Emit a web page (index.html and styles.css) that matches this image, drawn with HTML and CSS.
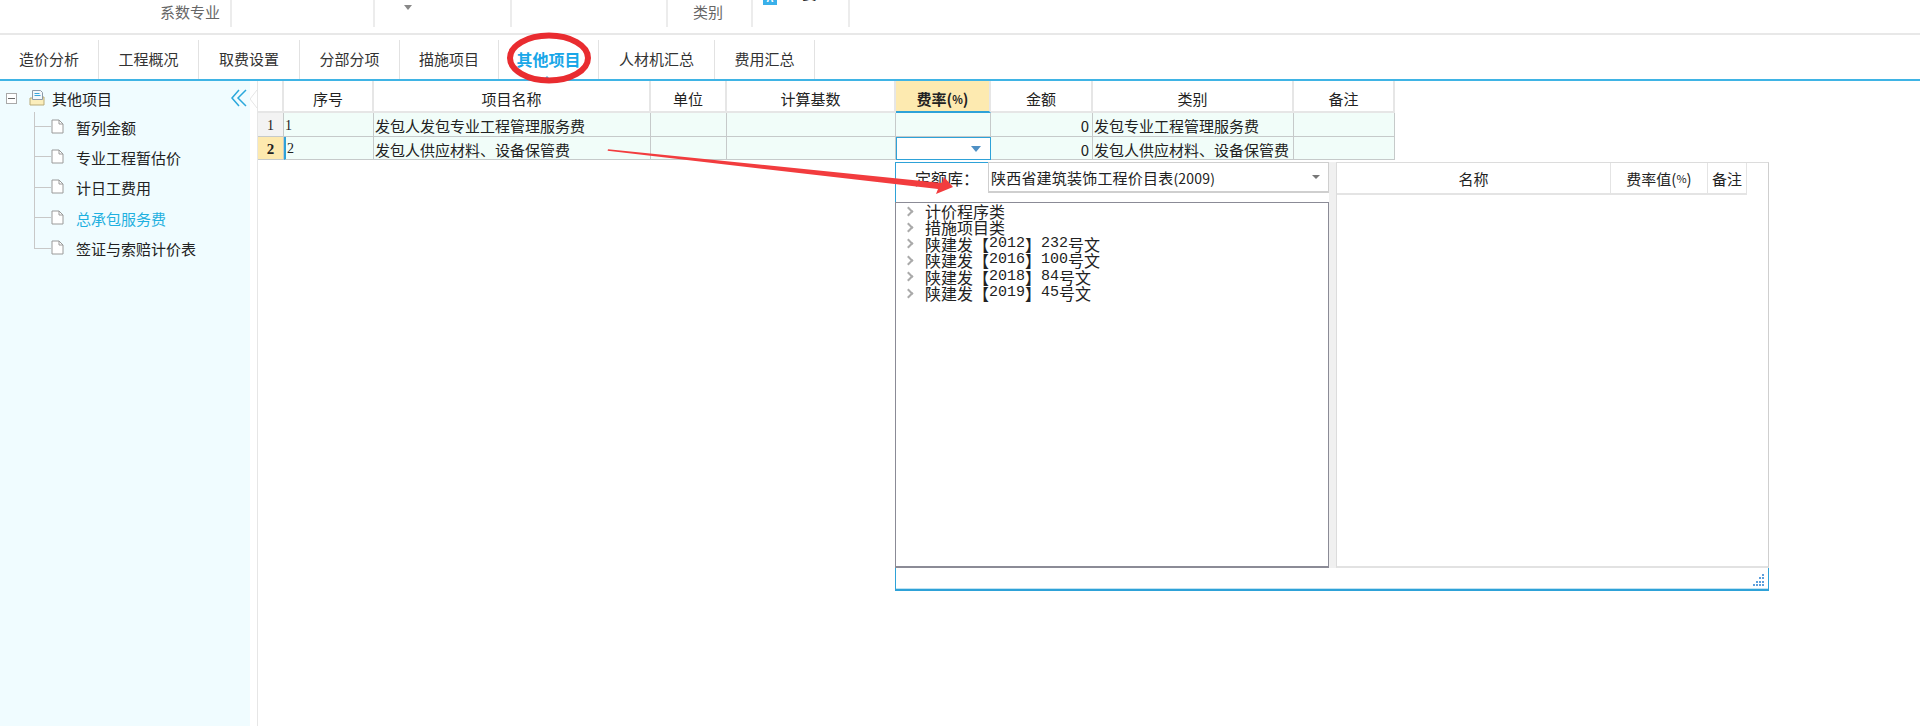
FILE: index.html
```html
<!DOCTYPE html>
<html lang="zh-CN">
<head>
  <meta charset="UTF-8">
  <title>其他项目</title>
  <link rel="stylesheet" href="styles.css">
</head>
<body>
<div class="page">

  <div class="topbar">
    <div class="top-cell top-label w1">系数专业</div>
    <div class="top-cell w2"></div>
    <div class="top-cell w3"><span class="mini-arrow"></span></div>
    <div class="top-cell w4"></div>
    <div class="top-cell top-label w5">类别</div>
    <div class="top-cell top-kind w6"><span class="kind-icon">A</span><span class="kind-text">主要</span></div>
  </div>

  <div class="tabs">
    <div class="tab t99">造价分析</div>
    <div class="tab t100">工程概况</div>
    <div class="tab t101">取费设置</div>
    <div class="tab t100">分部分项</div>
    <div class="tab t99">描施项目</div>
    <div class="tab t100 active">其他项目</div>
    <div class="tab t116">人材机汇总</div>
    <div class="tab t100">费用汇总</div>
  </div>

  <div class="main">
    <div class="sidebar">
      <div class="root">
        <span class="minus"></span>
        <svg class="root-icon" width="16" height="16" viewBox="0 0 16 16">
          <path d="M1 8h3l1-1h10v8H1z" fill="#fbeebc" stroke="#b9ab78"/>
          <path d="M3.5 .5h8l2 2v7h-10z" fill="#f4f8fb" stroke="#8d9aa8"/>
          <path d="M5.5 3.5h5M5.5 5.5h6" stroke="#3aa7dc"/>
        </svg>
        <span class="root-text">其他项目</span>
        <svg class="collapse" width="16" height="18" viewBox="0 0 16 18" fill="none" stroke="#2aa8dc" stroke-width="1.5">
          <path d="M8 1 1 9l7 8"/>
          <path d="M15 1 7 9l8 8"/>
        </svg>
      </div>
      <div class="node"><span class="elbow"></span><svg class="doc" width="13" height="15" viewBox="0 0 13 15"><path d="M1 1h7l4 4v9H1z" fill="#fff" stroke="#9a9a9a"/><path d="M8 1v4h4" fill="none" stroke="#9a9a9a"/></svg><span>暂列金额</span></div>
      <div class="node"><span class="elbow"></span><svg class="doc" width="13" height="15" viewBox="0 0 13 15"><path d="M1 1h7l4 4v9H1z" fill="#fff" stroke="#9a9a9a"/><path d="M8 1v4h4" fill="none" stroke="#9a9a9a"/></svg><span>专业工程暂估价</span></div>
      <div class="node"><span class="elbow"></span><svg class="doc" width="13" height="15" viewBox="0 0 13 15"><path d="M1 1h7l4 4v9H1z" fill="#fff" stroke="#9a9a9a"/><path d="M8 1v4h4" fill="none" stroke="#9a9a9a"/></svg><span>计日工费用</span></div>
      <div class="node current"><span class="elbow"></span><svg class="doc" width="13" height="15" viewBox="0 0 13 15"><path d="M1 1h7l4 4v9H1z" fill="#fff" stroke="#9a9a9a"/><path d="M8 1v4h4" fill="none" stroke="#9a9a9a"/></svg><span>总承包服务费</span></div>
      <div class="node"><span class="elbow"></span><svg class="doc" width="13" height="15" viewBox="0 0 13 15"><path d="M1 1h7l4 4v9H1z" fill="#fff" stroke="#9a9a9a"/><path d="M8 1v4h4" fill="none" stroke="#9a9a9a"/></svg><span>签证与索赔计价表</span></div>
    </div>

    <div class="splitter">
      <svg class="notch" width="7" height="18" viewBox="0 0 7 18" fill="#fff" stroke="#e6e6e6"><path d="M7 0 0 9l7 9"/></svg>
    </div>

    <div class="sheet">
      <div class="row head">
        <div class="cell"></div>
        <div class="cell">序号</div>
        <div class="cell">项目名称</div>
        <div class="cell">单位</div>
        <div class="cell">计算基数</div>
        <div class="cell rate-head">费率(<small>%</small>)</div>
        <div class="cell">金额</div>
        <div class="cell">类别</div>
        <div class="cell">备注</div>
      </div>
      <div class="row data r1">
        <div class="cell num-head">1</div>
        <div class="cell left">1</div>
        <div class="cell left">发包人发包专业工程管理服务费</div>
        <div class="cell"></div>
        <div class="cell"></div>
        <div class="cell"></div>
        <div class="cell right">0</div>
        <div class="cell left">发包专业工程管理服务费</div>
        <div class="cell"></div>
      </div>
      <div class="row data r2">
        <div class="cell num-head cur">2</div>
        <div class="cell left cur-left">2</div>
        <div class="cell left">发包人供应材料、设备保管费</div>
        <div class="cell"></div>
        <div class="cell"></div>
        <div class="cell editing"><span class="drop"></span></div>
        <div class="cell right">0</div>
        <div class="cell left">发包人供应材料、设备保管费</div>
        <div class="cell"></div>
      </div>
    </div>
  </div>

  <div class="popup">
    <div class="popup-body">
      <div class="pane-left">
        <div class="lib-row">
          <div class="lib-label">定额库：</div>
          <div class="combo"><span class="combo-text">陕西省建筑装饰工程价目表<small>(2009)</small></span><span class="combo-arrow"></span></div>
        </div>
        <div class="lib-tree">
          <div class="lib-item"><i></i>计价程序类</div>
          <div class="lib-item"><i></i>措施项目类</div>
          <div class="lib-item"><i></i>陕建发【<b>2012</b>】<b>232</b>号文</div>
          <div class="lib-item"><i></i>陕建发【<b>2016</b>】<b>100</b>号文</div>
          <div class="lib-item"><i></i>陕建发【<b>2018</b>】<b>84</b>号文</div>
          <div class="lib-item"><i></i>陕建发【<b>2019</b>】<b>45</b>号文</div>
        </div>
      </div>
      <div class="pane-right">
        <div class="rate-cols">
          <div class="rc c1">名称</div>
          <div class="rc c2">费率值(<small>%</small>)</div>
          <div class="rc c3">备注</div>
        </div>
      </div>
    </div>
    <div class="strip">
      <svg width="14" height="13" viewBox="0 0 14 13" fill="#5b9fdc">
        <rect x="11" y="0" width="2" height="2"/>
        <rect x="8" y="3" width="2" height="2"/><rect x="11" y="3" width="2" height="2"/>
        <rect x="5" y="7" width="2" height="2"/><rect x="8" y="7" width="2" height="2"/><rect x="11" y="7" width="2" height="2"/>
        <rect x="2" y="10" width="2" height="2"/><rect x="5" y="10" width="2" height="2"/><rect x="8" y="10" width="2" height="2"/><rect x="11" y="10" width="2" height="2"/>
      </svg>
    </div>
  </div>

  <!-- annotations drawn on top of the screenshot -->
  <svg class="marks" width="1920" height="726" viewBox="0 0 1920 726">
    <ellipse cx="549" cy="58" rx="39" ry="22.5" fill="none" stroke="#e92c30" stroke-width="6"/>
    <polygon points="608,149.2 942,183 944,177 953,187 936,194 938,189 607.6,150.8" fill="#f23c3e"/>
  </svg>

</div>
</body>
</html>
```

FILE: styles.css
```css
* {
  box-sizing: border-box;
  margin: 0;
  padding: 0;
}

body {
  font-family: "Noto Sans CJK SC", "Liberation Sans", sans-serif;
  font-size: 15px;
  color: #222;
  background: #fff;
  overflow: hidden;
}

.page {
  position: relative;
  width: 1920px;
  height: 726px;
  overflow: hidden;
  display: flex;
  flex-direction: column;
}

/* top toolbar, cut off by the screenshot */
.topbar {
  height: 35px;
  padding-bottom: 6px;
  border-bottom: 2px solid #e8e8e8;
  display: flex;
  flex: none;
}

.top-cell {
  height: 27px;
  border-right: 2px solid #ececec;
  overflow: hidden;
}

.top-label {
  color: #666;
  font-size: 15px;
  line-height: 24px;
  text-align: right;
}

.w1 { width: 232px; padding-right: 10px; }
.w2 { width: 143px; }
.w3 { width: 137px; }
.w4 { width: 156px; }
.w5 { width: 85px; padding-right: 28px; }
.w6 { width: 97px; }

.mini-arrow {
  display: block;
  width: 0;
  margin: 5px 0 0 29px;
  border: 4px solid transparent;
  border-top: 5px solid #888;
  border-bottom: 0;
}

.top-kind {
  display: flex;
  gap: 10px;
  padding-left: 10px;
}

.kind-icon {
  width: 14px;
  height: 14px;
  margin-top: -9px;
  background: #39b0ea;
  color: #fff;
  font-size: 10px;
  line-height: 14px;
  text-align: center;
  font-weight: 700;
  flex: none;
}

.kind-text {
  margin-top: -18px;
  line-height: 22px;
}

/* tabs */
.tabs {
  height: 46px;
  padding-top: 5px;
  border-bottom: 2px solid #3fb4e5;
  display: flex;
  flex: none;
}

.tab {
  height: 39px;
  line-height: 38px;
  text-align: center;
  border-right: 1px solid #e2e2e2;
  color: #333;
}

.t99 { width: 99px; }
.t100 { width: 100px; }
.t101 { width: 101px; }
.t116 { width: 116px; }

.tab.active {
  color: #19a7e8;
  font-weight: 700;
  font-size: 16px;
  position: relative;
}

.tab.active::after {
  content: "";
  position: absolute;
  left: 45px;
  bottom: 0;
  border: 3px solid transparent;
  border-bottom: 3px solid #3fb4e5;
  border-top: 0;
}

/* main area */
.main {
  flex: 1;
  display: flex;
  min-height: 0;
}

.sidebar {
  width: 250px;
  background: #f0fcff;
  flex: none;
}

.root {
  height: 31px;
  padding: 3px 3px 0 6px;
  display: flex;
  align-items: center;
}

.minus {
  width: 11px;
  height: 11px;
  border: 1px solid #a9a9a9;
  background: linear-gradient(#666, #666) center / 7px 1px no-repeat, #fff;
  flex: none;
}

.root-icon {
  margin: 0 7px 0 12px;
  flex: none;
}

.collapse {
  margin-left: auto;
}

.node {
  height: 30.4px;
  padding-left: 34px;
  display: flex;
  align-items: center;
  background: linear-gradient(#c8c8c8, #c8c8c8) 34px 0 / 1px 100% no-repeat;
}

.node:last-child {
  background: none;
}

.elbow {
  width: 17px;
  height: 15px;
  align-self: flex-start;
  border-left: 1px solid #c8c8c8;
  border-bottom: 1px solid #c8c8c8;
  flex: none;
}

.doc {
  margin: 0 12px 2px 0;
  flex: none;
}

.node.current {
  color: #1fb0e0;
}

.splitter {
  width: 8px;
  padding-top: 9px;
  border-right: 1px solid #e6e6e6;
  flex: none;
}

.notch {
  display: block;
}

/* grid */
.sheet {
  flex: 1;
}

.row {
  display: grid;
  grid-template-columns: 26px 90px 277px 76px 169px 95px 102px 201px 101px;
}

.head {
  height: 32px;
}

.r1 { height: 24px; }
.r2 { height: 23px; }

.cell {
  display: flex;
  align-items: center;
  justify-content: center;
  white-space: nowrap;
  overflow: hidden;
  border-right: 1px solid #c6caca;
  border-bottom: 1px solid #c6caca;
}

.head .cell {
  border-right: 2px solid #e6e6e6;
  border-bottom: 2px solid #e6e6e6;
  padding-top: 5px;
}

.data .cell {
  background: #f1fdf9;
  padding-top: 2px;
}

.data .num-head {
  background: #f3f3f3;
  font-family: "Liberation Serif", serif;
  font-size: 14px;
}

.data .num-head.cur {
  background: #fde9ae;
  font-weight: 700;
  font-size: 15px;
}

.left {
  justify-content: flex-start;
  padding-left: 1px;
}

.right {
  justify-content: flex-end;
  padding-right: 3px;
}

.data .left:nth-child(2) {
  font-family: "Liberation Serif", serif;
  font-size: 14px;
}

.data .cur-left {
  border-left: 2px solid #2ea2d8;
}

.head .rate-head {
  background: #fdeab0;
  border-bottom: 2px solid #2ea2d8;
  font-weight: 700;
}

small {
  font-size: 11px;
}

.data .editing {
  background: #fff;
  border: 1px solid #2ea2d8;
  justify-content: flex-end;
  padding: 0 9px 0 0;
}

.drop {
  border: 5px solid transparent;
  border-top: 6px solid #4f90c4;
  border-bottom: 0;
}

/* dropdown over the grid */
.popup {
  position: absolute;
  left: 895px;
  top: 162px;
  width: 874px;
  height: 429px;
  background: #fff;
  display: flex;
  flex-direction: column;
}

.popup-body {
  height: 406px;
  background: #f0f0f0;
  display: flex;
  flex: none;
}

.pane-left {
  width: 434px;
  margin-right: 7px;
  display: flex;
  flex-direction: column;
  flex: none;
}

.lib-row {
  height: 40px;
  background: #fff;
  border-left: 1px solid #2ea2d8;
  border-top: 1px solid #2ea2d8;
  display: flex;
  align-items: flex-start;
  flex: none;
}

.lib-label {
  width: 92px;
  height: 31px;
  padding-left: 19px;
  line-height: 30px;
  font-size: 16px;
  flex: none;
}

.combo {
  flex: 1;
  height: 31px;
  margin-top: -1px;
  padding: 0 8px 0 2px;
  border: 1px solid #cfcfcf;
  border-bottom-width: 2px;
  display: flex;
  align-items: center;
  justify-content: space-between;
  white-space: nowrap;
}

.combo-text {
  letter-spacing: .2px;
}

.combo-arrow {
  border: 4px solid transparent;
  border-top: 4px solid #777;
  border-bottom: 0;
}

.combo small {
  font-size: 14px;
}

.lib-tree {
  flex: 1;
  min-height: 0;
  background: #fff;
  border: 1px solid #8b8b96;
  border-bottom-width: 2px;
  overflow: hidden;
}

.lib-item {
  height: 16.4px;
  padding-left: 9px;
  display: flex;
  align-items: center;
  font-size: 16px;
  line-height: 16.4px;
  white-space: nowrap;
}

.lib-item i {
  width: 7px;
  height: 7px;
  margin-right: 13px;
  border-top: 2px solid #aaa;
  border-right: 2px solid #aaa;
  transform: rotate(45deg);
  flex: none;
}

.lib-item b {
  font-family: "Liberation Mono", monospace;
  font-weight: 400;
  font-size: 15px;
}

.pane-right {
  flex: 1;
  background: #fff;
  border-top: 1px solid #dcdcdc;
  border-left: 1px solid #dcdcdc;
  border-right: 1px solid #cfcfcf;
  border-bottom: 2px solid #e2e2e2;
}

.rate-cols {
  height: 32px;
  display: flex;
}

.rc {
  height: 100%;
  border-right: 1px solid #e4e4e4;
  border-bottom: 2px solid #e4e4e4;
  display: flex;
  align-items: center;
  justify-content: center;
}

.c1 { width: 274px; }
.c2 { width: 97px; }
.c3 { width: 39px; }

.strip {
  flex: 1;
  padding: 6px 3px 0 0;
  border-left: 1px solid #2ea2d8;
  border-right: 1px solid #2ea2d8;
  border-bottom: 2px solid #2ea2d8;
  box-shadow: inset 0 -1px 0 #bfe3f3;
  display: flex;
  justify-content: flex-end;
  align-items: flex-start;
}

.marks {
  position: absolute;
  left: 0;
  top: 0;
  pointer-events: none;
}
```
